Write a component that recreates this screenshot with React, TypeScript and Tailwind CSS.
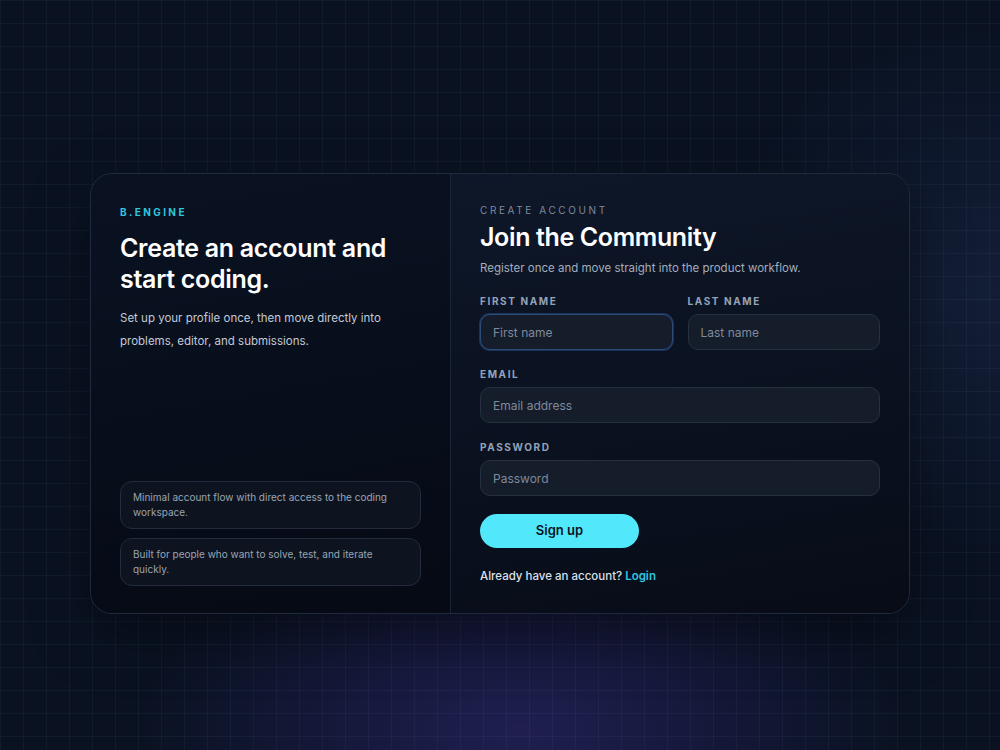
import React from "react";

const font = { fontFamily: "Inter, 'Noto Sans', sans-serif" };

function Field({ label, placeholder, focused }: { label: string; placeholder: string; focused?: boolean }) {
  return (
    <div className="flex flex-col">
      <label className="text-[10px] leading-[12px] font-bold tracking-[0.16em] text-[#94a3b8]">{label}</label>
      <input
        placeholder={placeholder}
        className={
          "mt-[7px] h-[36px] w-full rounded-[10px] bg-[#151c2a] px-[12px] text-[12px] text-slate-200 placeholder:text-[#7f8a9c] outline-none border " +
          (focused ? "border-[#2b4a7a] shadow-[0_0_0_1px_rgba(56,112,190,0.35)]" : "border-[#263041]")
        }
        style={font}
      />
    </div>
  );
}

export default function App() {
  return (
    <div
      className="relative min-h-[750px] w-full overflow-hidden bg-[#0a1222]"
      style={font}
    >
      <div className="pointer-events-none absolute inset-0 bg-[radial-gradient(ellipse_380px_200px_at_520px_730px,rgba(40,36,100,0.7),transparent)]" />
      <div className="pointer-events-none absolute inset-0 bg-[radial-gradient(ellipse_260px_260px_at_980px_290px,rgba(30,45,80,0.45),transparent)]" />
      <div className="pointer-events-none absolute inset-0 bg-[linear-gradient(to_right,rgba(120,140,180,0.07)_1px,transparent_1px),linear-gradient(to_bottom,rgba(120,140,180,0.07)_1px,transparent_1px)] bg-[size:23px_23px]" />
      <div className="relative flex justify-center pt-[173px]">
        <div className="flex h-[441px] w-[820px] overflow-hidden rounded-[22px] border border-[#1f2a3c] bg-[linear-gradient(160deg,#0b1425,#060b16)] shadow-[0_20px_60px_rgba(0,0,0,0.4)]">
          {/* Left */}
          <div className="flex w-[360px] flex-col justify-between border-r border-[#1c2536] bg-[linear-gradient(170deg,#0a1222,#050a14)] px-[29px] pt-[31px] pb-[27px]">
            <div>
              <div className="text-[10px] leading-[14px] font-bold tracking-[0.24em] text-[#2fc6dd]">B.ENGINE</div>
              <h1 className="mt-[14px] text-[25px] leading-[31px] font-semibold tracking-[-0.012em] text-white">
                Create an account and
                <br />
                start coding.
              </h1>
              <p className="mt-[12px] text-[11.5px] leading-[23px] text-[#c3cad6]">
                Set up your profile once, then move directly into problems, editor, and submissions.
              </p>
            </div>
            <div className="flex flex-col gap-[9px]">
              <div className="rounded-[12px] border border-[#222c3c] bg-[#0d1420] px-[12px] py-[8px] text-[10px] leading-[15px] text-[#9aa4b4]">
                Minimal account flow with direct access to the coding workspace.
              </div>
              <div className="rounded-[12px] border border-[#222c3c] bg-[#0d1420] px-[12px] py-[8px] text-[10px] leading-[15px] text-[#9aa4b4]">
                Built for people who want to solve, test, and iterate quickly.
              </div>
            </div>
          </div>
          {/* Right */}
          <div className="flex flex-1 flex-col bg-[linear-gradient(170deg,#0e1729,#070c17)] p-[29px]">
            <div className="text-[10px] leading-[14px] tracking-[0.26em] text-[#7d899b]">CREATE ACCOUNT</div>
            <h2 className="mt-[4px] text-[25px] leading-[32px] font-semibold tracking-[-0.015em] text-white">Join the Community</h2>
            <p className="mt-[7px] text-[11.5px] leading-[16px] text-[#a3adbd]">
              Register once and move straight into the product workflow.
            </p>
            <div className="mt-[19px] grid grid-cols-2 gap-[15px]">
              <Field label="FIRST NAME" placeholder="First name" focused />
              <Field label="LAST NAME" placeholder="Last name" />
            </div>
            <div className="mt-[18px]">
              <Field label="EMAIL" placeholder="Email address" />
            </div>
            <div className="mt-[18px]">
              <Field label="PASSWORD" placeholder="Password" />
            </div>
            <button className="mt-[18px] h-[36px] w-[159px] rounded-full bg-[#52e8fb] text-[13px] font-semibold text-[#0b1324]">
              Sign up
            </button>
            <p className="mt-[20px] text-[11.5px] leading-[16px] font-medium text-[#dbe1ea]">
              Already have an account? <span className="font-semibold text-[#2fc6e0]">Login</span>
            </p>
          </div>
        </div>
      </div>
    </div>
  );
}
